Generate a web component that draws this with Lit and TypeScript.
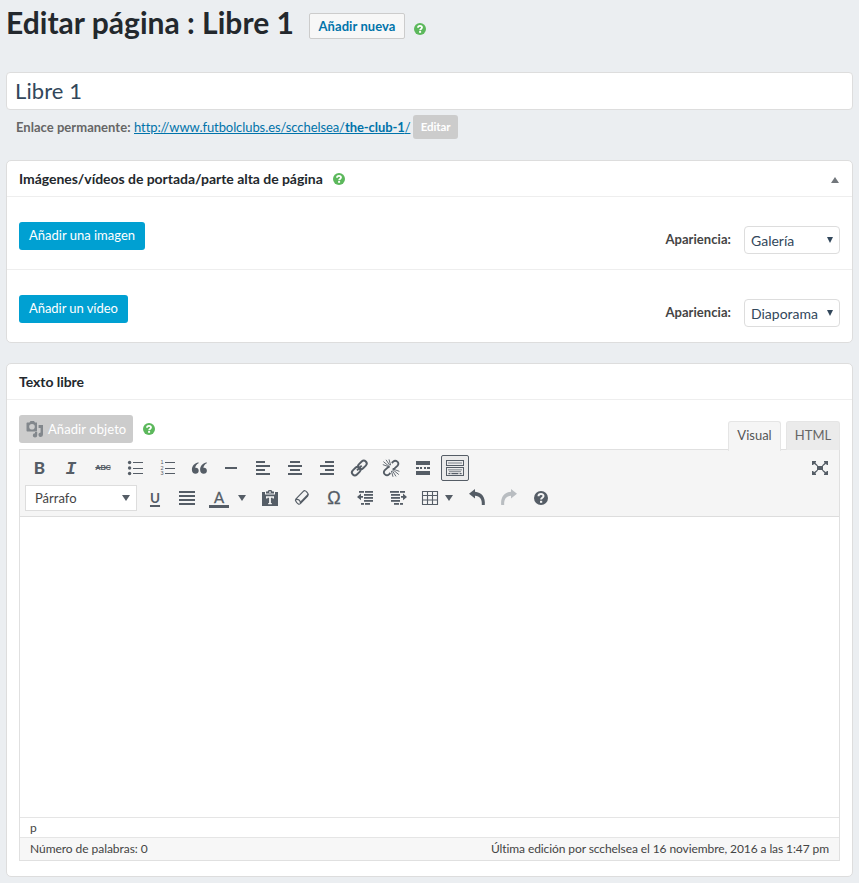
import { LitElement, html, css, svg, TemplateResult } from "lit";
import { customElement, property } from "lit/decorators.js";

const rects = (list: number[][]) =>
  list.map(([x, y, w, h]) => svg`<rect x=${x} y=${y} width=${w} height=${h} />`);

const keys = (y: number, n: number, x0: number) =>
  rects(Array.from({ length: n }, (_, i) => [x0 + i * 2, y, 1.2, 1.2]));

const ICONS: Record<string, TemplateResult> = {
  bullets: svg`<circle cx="4.6" cy="4.5" r="1.7"/><circle cx="4.6" cy="10" r="1.7"/><circle cx="4.6" cy="15.5" r="1.7"/>${rects([[8, 4, 10, 1], [8, 10, 10, 1], [8, 15, 10, 1]])}`,
  numbers: svg`${rects([[8, 4, 10, 1], [8, 10, 10, 1], [8, 15, 10, 1]])}<text x="3.4" y="6.4" class="num">1</text><text x="3.4" y="12" class="num">2</text><text x="3.4" y="17.4" class="num">3</text>`,
  quote: svg`<path d="M9.4 4.2C5.9 5 2.9 7.7 2.9 11.7C2.9 14.2 4.4 15.8 6.5 15.8C8.4 15.8 9.7 14.5 9.7 12.7C9.7 11 8.5 9.8 6.9 9.8C6.6 9.8 6.4 9.8 6.2 9.9C6.4 8 7.6 6.3 9.6 5.3Z M17.6 4.2C14.1 5 11.1 7.7 11.1 11.7C11.1 14.2 12.6 15.8 14.7 15.8C16.6 15.8 17.9 14.5 17.9 12.7C17.9 11 16.7 9.8 15.1 9.8C14.8 9.8 14.6 9.8 14.4 9.9C14.6 8 15.8 6.3 17.8 5.3Z"/>`,
  hr: svg`${rects([[4, 9, 12, 2]])}`,
  left: svg`${rects([[3, 3, 9, 2], [3, 7, 14, 2], [3, 11, 9, 2], [3, 15, 14, 2]])}`,
  center: svg`${rects([[5, 3, 10, 2], [3, 7, 14, 2], [5, 11, 10, 2], [3, 15, 14, 2]])}`,
  right: svg`${rects([[8, 3, 9, 2], [3, 7, 14, 2], [8, 11, 9, 2], [3, 15, 14, 2]])}`,
  justify: svg`${rects([[2, 3, 16, 2], [2, 7, 16, 2], [2, 11, 16, 2], [2, 15, 16, 2]])}`,
  link: svg`<g fill="none" stroke="currentColor" stroke-width="1.9"><rect x="8.6" y="4" width="9.6" height="5.8" rx="2.9" transform="rotate(-45 13.4 6.9)"/><rect x="2.4" y="10.2" width="9.6" height="5.8" rx="2.9" transform="rotate(-45 7.2 13.1)"/><path d="M8 12.3L12.7 7.6"/></g>`,
  unlink: svg`<g fill="none" stroke="currentColor" stroke-width="1.9"><path d="M10.8 5L12.2 3.6C14.8 1.2 19.1 4.8 16.6 7.6L13.6 10.4C12.9 11 12.2 11.1 11.6 11M9.4 15L8 16.4C5.4 18.8 1.1 15.2 3.6 12.4L6.6 9.6C7.3 9 8 8.9 8.6 9"/></g><path fill="none" stroke="currentColor" stroke-width="0.9" d="M2.4 3.6L8.2 8.4M5 1.8L9 7.6M8 1.4L9.6 7M1.8 6.6L7.4 8.6M12 11.8L17.8 16.6M11.2 12.4L15 18.4M10.4 13L12 18.8M12.6 11.2L18.4 13.4"/>`,
  more: svg`${rects([[3, 3, 14, 4], [3, 9, 3, 2], [7, 9, 2, 2], [11, 9, 2, 2], [14, 9, 3, 2], [3, 13, 14, 4]])}`,
  kitchen: svg`<g fill="none" stroke="currentColor" stroke-width="1"><rect x="1.5" y="2.5" width="17" height="5"/><rect x="1.5" y="9.5" width="17" height="8"/></g>${keys(4.4, 7, 3.4)}${keys(11.2, 7, 3.4)}${keys(13, 6, 4.4)}${rects([[3.4, 15, 2, 1.2], [6.4, 15, 7, 1.2], [14.6, 15, 2, 1.2]])}`,
  full: svg`<rect x="7" y="8" width="6" height="4"/><path d="M2 3H6V4.2L5.2 4.8L8 7.4L7.2 8.2L4 5.8L3.2 7H2ZM18 3V7H16.8L16 5.8L12.8 8.2L12 7.4L14.8 4.8L14 4.2V3ZM2 17V13H3.2L4 14.2L7.2 11.8L8 12.6L5.2 15.2L6 15.8V17ZM18 17H14V15.8L14.8 15.2L12 12.6L12.8 11.8L16 14.2L16.8 13H18Z"/>`,
  paste: svg`<path fill-rule="evenodd" d="M2 4H5V6.5H15V4H18V18H2Z M6 8.2V10.6H7.4V9.8H9.1V15H8.2V16.2H11.8V15H10.9V9.8H12.6V10.6H14V8.2Z"/><path fill-rule="evenodd" d="M6 5.6V3.6H7.7C8 2.3 8.7 2 10 2S12 2.3 12.3 3.6H14V5.6ZM10 3.2A.9.9 0 1 0 10 5A.9.9 0 0 0 10 3.2Z"/>`,
  eraser: svg`<path fill="none" stroke="currentColor" stroke-width="1.2" stroke-linejoin="round" d="M11.3 3.3L4 10.9C3.3 11.7 3.3 12.8 4.1 13.7L5.1 15C5.9 16 7.2 16.8 8.3 15.7L15.6 8C16.5 7 16.5 6 15.7 5.1L14.6 3.8C13.6 2.7 12.3 2.3 11.3 3.3Z M3.7 11.6C6 10.5 8.8 12.6 8.4 15.3"/><path d="M7.9 14L15.9 5.7L16.1 8L8.4 16Z"/>`,
  outdent: svg`${rects([[3, 3, 5, 1.8], [9, 3, 8, 1.8], [8, 6, 9, 1.8], [8, 9, 9, 1.8], [8, 12, 9, 1.8], [5, 15, 3, 1.8], [9, 15, 5, 1.8]])}<path d="M1 8.9L5 5.5V8H7V9.8H5V12.2Z"/>`,
  indent: svg`${rects([[2, 3, 9, 1.8], [12, 3, 5, 1.8], [3, 6, 9, 1.8], [3, 9, 9, 1.8], [3, 12, 9, 1.8], [6, 15, 5, 1.8], [12, 15, 3, 1.8]])}<path d="M19 8.9L15 5.5V8H13V9.8H15V12.2Z"/>`,
  table: svg`<path fill="none" stroke="currentColor" stroke-width="1.1" d="M2.5 3.5H17.5V16.5H2.5ZM2.5 7.5H17.5M2.5 12H17.5M7.5 3.5V16.5M12.5 3.5V16.5"/>`,
  undo: svg`<path d="M8 1V3.7C14.5 4.2 18.6 9 17.8 17H14.8C15.2 11 12.8 8 8 7.8V10.5L2 5.7Z"/>`,
  redo: svg`<path d="M12 1V3.7C5.5 4.2 1.4 9 2.2 17H5.2C4.8 11 7.2 8 12 7.8V10.5L18 5.7Z"/>`,
  help: svg`<circle cx="10" cy="10" r="7"/><path fill="none" stroke="#f5f5f5" stroke-width="2" d="M7.5 8.2C7.5 5.3 12.5 5.2 12.5 8C12.5 9.7 10.1 9.7 10.1 11.6"/><rect x="9" y="12.8" width="2.2" height="2" fill="#f5f5f5"/>`,
  media: svg`<path fill-rule="evenodd" d="M2.5 3.5H4.5L5.5 2H9L10 3.5H12V12.500H2.500C1.900 12.500 1.500 12 1.500 11.500V4.500C1.500 3.900 1.900 3.500 2.500 3.500ZM7 5A2.800 2.800 0 1 0 7 10.600A2.800 2.800 0 0 0 7 5Z"/><path d="M13.6 6H18V15.6A2.3 2.3 0 1 1 15.6 13.4V9H13.6ZM12.2 13V16.3A2.200 2.200 0 1 1 10 14.2V13Z"/>`,
};

@customElement("tb-icon")
export class TbIcon extends LitElement {
  @property() name = "";
  static styles = css`
    :host { display: block; width: 20px; height: 20px; flex: none; }
    svg { display: block; fill: currentColor; overflow: visible; }
    .num { font: 400 5.5px "Liberation Sans", sans-serif; }
  `;
  render() {
    return html`<svg width="20" height="20" viewBox="0 0 20 20">${ICONS[this.name]}</svg>`;
  }
}

@customElement("help-dot")
export class HelpDot extends LitElement {
  static styles = css`
    :host { display: block; width: 12px; height: 12px; flex: none; }
    svg { display: block; }
  `;
  render() {
    return html`<svg width="12" height="12" viewBox="0 0 12 12">
      <circle cx="6" cy="6" r="6" fill="#5cb85c" />
      <path d="M4 4.7C4 2.3 8 2.4 8 4.6C8 6 6.1 5.8 6.1 7.3" fill="none" stroke="#fff" stroke-width="1.8" />
      <rect x="5.1" y="8" width="2" height="1.8" fill="#fff" />
    </svg>`;
  }
}

@customElement("app-root")
export class AppRoot extends LitElement {
  static styles = css`
    :host {
      display: block; box-sizing: border-box; width: 859px; height: 883px; overflow: hidden;
      background: #ebeef1; padding: 0 6px; color: #444;
      font: 13px/18px Lato, sans-serif;
    }
    * { box-sizing: border-box; }
    h1, h2 { margin: 0; color: #23282d; white-space: nowrap; }
    .head { display: flex; height: 72px; align-items: flex-start; }
    h1 { font-size: 30px; font-weight: 700; line-height: 36px; width: 303px; padding-top: 4px; letter-spacing: 0.02px; }
    .new {
      margin-top: 13px; width: 96px; height: 26px; border: 1px solid #ccc; border-radius: 2px;
      background: #f7f7f7; color: #0073aa; font-weight: 700; line-height: 25px; text-align: center; letter-spacing: 0.08px;
    }
    .head help-dot { margin: 23px 0 0 9px; }
    .title {
      height: 38px; border: 1px solid #ddd; border-radius: 4px; background: #fff;
      padding-left: 8px; font-size: 22px; line-height: 36px; color: #32475b; letter-spacing: 0.1px;
    }
    .perma { display: flex; align-items: center; height: 24px; margin: 5px 0 21px 10px; color: #666; white-space: pre; }
    .perma .link { color: #0073aa; text-decoration: underline; margin-left: 3px; width: 276px; letter-spacing: -0.08px; }
    .perma > b { width: 115px; letter-spacing: 0.03px; }
    .perma .edit {
      margin-left: 3px; width: 45px; height: 24px; border-radius: 3px; background: #ccc;
      color: #fff; font-size: 11.5px; font-weight: 700; line-height: 24px; text-align: center; letter-spacing: -0.1px;
    }
    .panel { border: 1px solid #ddd; border-radius: 5px; background: #fff; }
    .images { height: 183px; margin-bottom: 20px; }
    .text { height: 514px; }
    .phead { display: flex; align-items: center; height: 36px; padding: 0 12px; border-bottom: 1px solid #eee; }
    h2 { font-size: 14px; font-weight: 700; line-height: 20px; letter-spacing: -0.04px; }
    .phead help-dot { margin-left: 10px; }
    .tri { margin-left: auto; margin-right: 1px; border: 4px solid transparent; border-top: 0; border-bottom: 6px solid #72777c; margin-top: 3px; }
    .row { display: flex; align-items: flex-start; justify-content: space-between; height: 72px; padding: 25px 12px 0; }
    .row + .row { height: 73px; border-top: 1px solid #eee; }
    .blue { height: 28px; border-radius: 3px; background: #00a0d2; color: #fff; font-size: 13px; line-height: 27px; padding: 0 10px; }
    .row + .row .blue { letter-spacing: -0.05px; }
    .look { display: flex; gap: 13px; padding-top: 4px; }
    .look b { line-height: 27px; letter-spacing: 0.06px; }
    .select {
      display: flex; align-items: center; justify-content: space-between; width: 96px; height: 28px;
      border: 1px solid #ddd; border-radius: 4px; padding: 2px 6px 0; font-size: 14px; color: #32475b;
    }
    .down { border: 3.5px solid transparent; border-bottom: 0; border-top: 6px solid #32475b; margin-top: -2px; }
    .media { display: flex; align-items: flex-end; height: 50px; margin: 0 12px; }
    .add {
      display: flex; align-items: center; gap: 3px; width: 114px; height: 28px; margin-bottom: 7px;
      border-radius: 3px; background: #ccc; color: #fff; font-size: 13px; padding-left: 6px; white-space: nowrap;
      letter-spacing: 0.08px;
    }
    .add tb-icon { color: #82878c; }
    .media help-dot { margin: 0 0 15px 10px; }
    .tabs { display: flex; gap: 5px; margin-left: auto; align-items: flex-end; }
    .tab {
      width: 54px; height: 29px; border: 1px solid #e5e5e5; border-bottom: 0; border-radius: 3px 3px 0 0;
      background: #ebebeb; color: #666; font-size: 13px; line-height: 26px; text-align: center;
    }
    .tab.on { width: 53px; height: 30px; background: #f5f5f5; color: #555; margin-bottom: -1px; position: relative; }
    .editor { height: 412px; margin: -1px 12px 0; border: 1px solid #e0e0e0; display: flex; flex-direction: column; }
    .bars { height: 67px; background: #f5f5f5; border-bottom: 1px solid #ddd; padding: 5px; color: #555d66; }
    .bar { display: flex; gap: 4px; height: 30px; align-items: flex-start; }
    .btn { width: 28px; height: 26px; display: flex; align-items: center; justify-content: center; flex: none; }
    .btn.on { border: 1px solid #555d66; border-radius: 2px; background: #ebebeb; }
    .end { margin-left: auto; margin-right: 0; }
    .glyph { font-size: 17px; font-weight: 900; line-height: 26px; padding-left: 1px; }
    .i { font: italic 700 18px/26px "Liberation Mono", monospace; padding-top: 2px; }
    .abc { font: 700 7.5px/26px "Liberation Sans", sans-serif; letter-spacing: -0.3px; text-decoration: line-through; }
    .u { font-size: 13.5px; text-decoration: underline; text-decoration-thickness: 2px; text-underline-offset: 2px; }
    .a { font-size: 15px; font-weight: 400; line-height: 18px; width: 20px; height: 20px; border-bottom: 3px solid #555d66; text-align: center; -webkit-text-stroke: 0.3px #555d66; }
    .omega { font: 400 18px/26px "Liberation Sans", sans-serif; -webkit-text-stroke: 0.3px #555d66; }
    .para {
      width: 112px; height: 26px; border: 1px solid #ddd; background: #fff; display: flex; align-items: center;
      justify-content: space-between; padding: 0 6px 0 9px; color: #444;
    }
    .caret { border: 4px solid transparent; border-bottom: 0; border-top: 6px solid #555d66; }
    .drop { display: flex; align-items: center; height: 26px; }
    .drop.wide { width: 15px; padding-left: 1px; }
    .drop.slim { width: 11px; margin-left: -3px; margin-right: 3px; }
    .off { color: #b9bdc1; }
    .canvas { flex: 1; }
    .path { height: 20px; border-top: 1px solid #e5e5e5; padding-left: 10px; font-size: 12px; line-height: 20px; }
    .status {
      height: 23px; border-top: 1px solid #e5e5e5; background: #f7f7f7; display: flex; justify-content: space-between;
      padding: 0 10px; font-size: 12px; line-height: 22px; letter-spacing: -0.05px;
    }
    .status .last { letter-spacing: -0.09px; }
  `;

  private btn(name: string, cls = "") {
    return html`<div class="btn ${cls}"><tb-icon name=${name}></tb-icon></div>`;
  }

  private mediaRow(label: string, value: string) {
    return html`<div class="row">
      <div class="blue">${label}</div>
      <div class="look"><b>Apariencia:</b><div class="select"><span>${value}</span><i class="down"></i></div></div>
    </div>`;
  }

  render() {
    return html`
      <div class="head"><h1><span>Editar página : Libre 1</span></h1><div class="new">Añadir nueva</div><help-dot></help-dot></div>
      <div class="title">Libre 1</div>
      <div class="perma"><b>Enlace permanente:</b><span class="link">http://www.futbolclubs.es/scchelsea/<b>the-club-1</b>/</span><div class="edit">Editar</div></div>
      <div class="panel images">
        <div class="phead"><h2>Imágenes/vídeos de portada/parte alta de página</h2><help-dot></help-dot><i class="tri"></i></div>
        ${this.mediaRow("Añadir una imagen", "Galería")}
        ${this.mediaRow("Añadir un vídeo", "Diaporama")}
      </div>
      <div class="panel text">
        <div class="phead"><h2>Texto libre</h2></div>
        <div class="media">
          <div class="add"><tb-icon name="media"></tb-icon><span>Añadir objeto</span></div><help-dot></help-dot>
          <div class="tabs"><div class="tab on">Visual</div><div class="tab">HTML</div></div>
        </div>
        <div class="editor">
          <div class="bars">
            <div class="bar">
              <div class="btn glyph">B</div><div class="btn i">I</div><div class="btn"><span class="abc">ABC</span></div>
              ${["bullets", "numbers", "quote", "hr", "left", "center", "right", "link", "unlink", "more"].map((n) => this.btn(n))}
              ${this.btn("kitchen", "on")}${this.btn("full", "end")}
            </div>
            <div class="bar">
              <div class="para"><span>Párrafo</span><i class="caret"></i></div>
              <div class="btn"><b class="u">U</b></div>
              ${this.btn("justify")}
              <div class="btn"><span class="a">A</span></div><div class="drop wide"><i class="caret"></i></div>
              ${this.btn("paste")}${this.btn("eraser")}<div class="btn omega">Ω</div>
              ${this.btn("outdent")}${this.btn("indent")}${this.btn("table")}
              <div class="drop slim"><i class="caret"></i></div>
              ${this.btn("undo")}${this.btn("redo", "off")}${this.btn("help")}
            </div>
          </div>
          <div class="canvas"></div>
          <div class="path">p</div>
          <div class="status"><span>Número de palabras: 0</span><span class="last">Última edición por scchelsea el 16 noviembre, 2016 a las 1:47 pm</span></div>
        </div>
      </div>
    `;
  }
}
